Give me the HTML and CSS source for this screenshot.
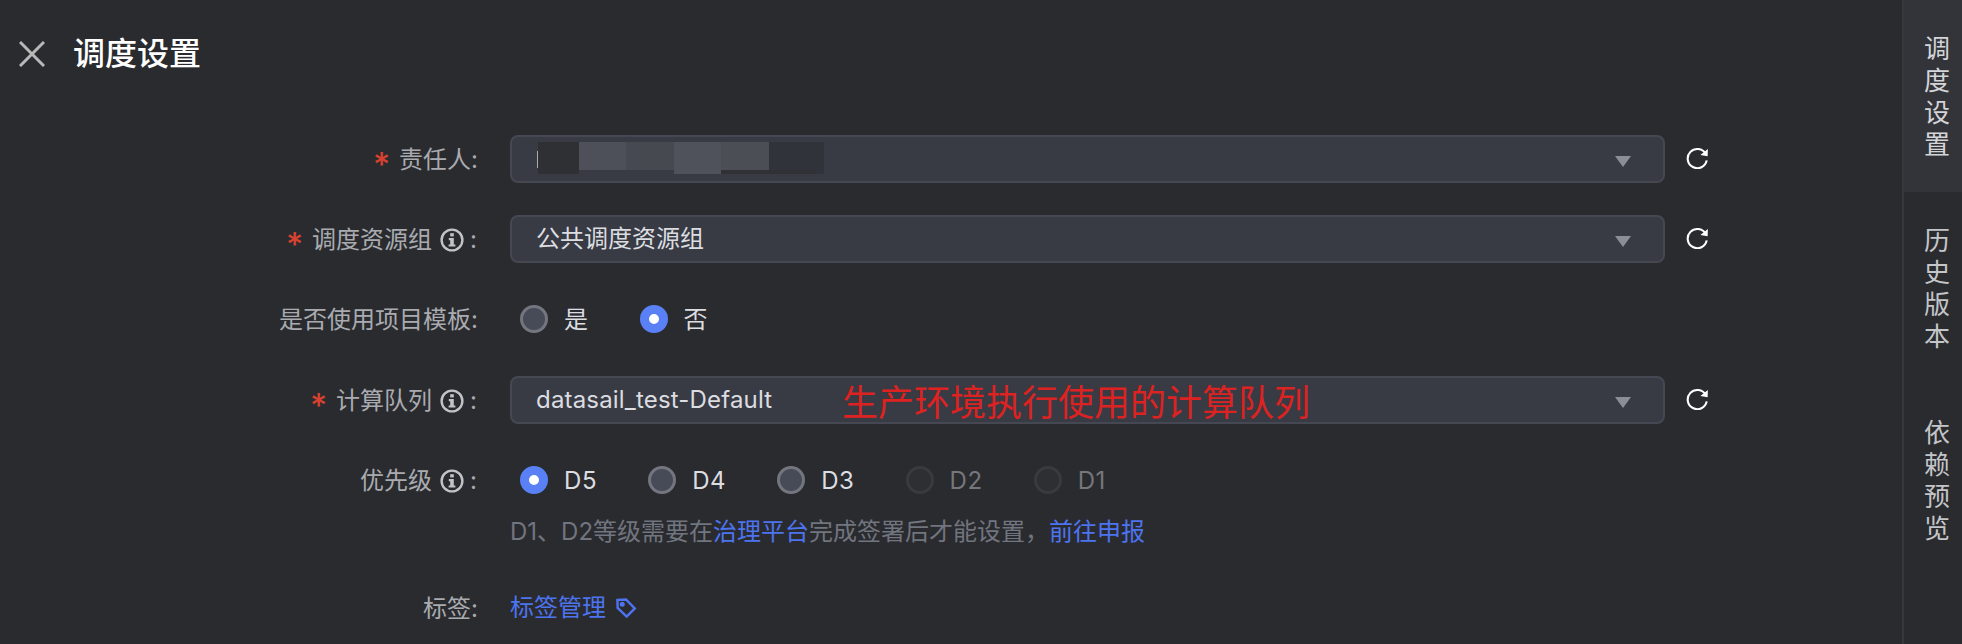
FILE: index.html
```html
<!DOCTYPE html>
<html lang="zh-CN">
<head>
<meta charset="utf-8">
<title>调度设置</title>
<link rel="stylesheet" href="styles.css">
</head>
<body>
<div class="page">
  <main class="main">
    <header class="header">
      <svg class="close" viewBox="0 0 26 26"><path d="M1 1 25 25M25 1 1 25"/></svg>
      <h1 class="title">调度设置</h1>
    </header>
    <form class="form">
      <div class="row row-select">
        <div class="label"><span class="star">*</span><span>责任人</span><span class="colon-tight">:</span></div>
        <div class="select">
          <div class="mosaic">
            <i class="caret"></i>
            <span class="m m1"></span><span class="m m2"></span><span class="m m3"></span><span class="m m4"></span><span class="m m5"></span><span class="m m6"></span>
            <span class="strip"></span>
          </div>
          <i class="arrow"></i>
        </div>
        <svg class="refresh" viewBox="0 0 24 24"><path d="M20.5 8.2A10 10 0 1 0 21.6 15"/><path class="fill" d="M22.8 3 22.6 10.8 15 9.4Z"/></svg>
      </div>
      <div class="row row-select">
        <div class="label"><span class="star">*</span><span>调度资源组</span><svg class="info" viewBox="0 0 24 24"><circle cx="12" cy="12" r="10.4"/><rect class="fill" x="10.2" y="5.2" width="3.6" height="3.2"/><path class="fill" d="M8.8 10h5v6.4h1.6v2.2H8.6v-2.2h1.6v-4.2H8.8Z"/></svg><span class="colon">:</span></div>
        <div class="select"><span class="value">公共调度资源组</span><i class="arrow"></i></div>
        <svg class="refresh" viewBox="0 0 24 24"><path d="M20.5 8.2A10 10 0 1 0 21.6 15"/><path class="fill" d="M22.8 3 22.6 10.8 15 9.4Z"/></svg>
      </div>
      <div class="row row-radio">
        <div class="label"><span>是否使用项目模板</span><span class="colon-tight">:</span></div>
        <div class="radios">
          <label class="radio"><i class="dot"></i>是</label>
          <label class="radio"><i class="dot on"></i>否</label>
        </div>
      </div>
      <div class="row row-select row-queue">
        <div class="label"><span class="star">*</span><span>计算队列</span><svg class="info" viewBox="0 0 24 24"><circle cx="12" cy="12" r="10.4"/><rect class="fill" x="10.2" y="5.2" width="3.6" height="3.2"/><path class="fill" d="M8.8 10h5v6.4h1.6v2.2H8.6v-2.2h1.6v-4.2H8.8Z"/></svg><span class="colon">:</span></div>
        <div class="select">
          <span class="value latin">datasail_test-Default</span>
          <span class="note">生产环境执行使用的计算队列</span>
          <i class="arrow"></i>
        </div>
        <svg class="refresh" viewBox="0 0 24 24"><path d="M20.5 8.2A10 10 0 1 0 21.6 15"/><path class="fill" d="M22.8 3 22.6 10.8 15 9.4Z"/></svg>
      </div>
      <div class="row row-radio">
        <div class="label"><span>优先级</span><svg class="info" viewBox="0 0 24 24"><circle cx="12" cy="12" r="10.4"/><rect class="fill" x="10.2" y="5.2" width="3.6" height="3.2"/><path class="fill" d="M8.8 10h5v6.4h1.6v2.2H8.6v-2.2h1.6v-4.2H8.8Z"/></svg><span class="colon">:</span></div>
        <div class="radios">
          <label class="radio"><i class="dot on"></i>D5</label>
          <label class="radio"><i class="dot"></i>D4</label>
          <label class="radio"><i class="dot"></i>D3</label>
          <label class="radio disabled"><i class="dot"></i>D2</label>
          <label class="radio disabled"><i class="dot"></i>D1</label>
        </div>
      </div>
      <div class="row row-hint">
        <div class="label"></div>
        <p class="hint">D1、D2等级需要在<a class="link">治理平台</a>完成签署后才能设置，<a class="link">前往申报</a></p>
      </div>
      <div class="row row-tags">
        <div class="label"><span>标签</span><span class="colon-tight">:</span></div>
        <a class="link tag-link">标签管理<svg class="tag" viewBox="0 0 20 20"><path d="M2.2 2.6 10 2.2 18 10.4 10.6 17.8 2.4 10Z"/><circle cx="6.6" cy="6.6" r="1.2"/></svg></a>
      </div>
    </form>
  </main>
  <nav class="side">
    <div class="tab active">调度设置</div>
    <div class="tab">历史版本</div>
    <div class="tab">依赖预览</div>
  </nav>
</div>
</body>
</html>
```
FILE: styles.css
```css
* { box-sizing: border-box; }
html, body { margin: 0; height: 100%; }
body {
  background: #2a2b2f;
  color: #dcdde0;
  font-family: "Inter", "Noto Sans CJK SC", sans-serif;
  font-size: 24px;
  overflow: hidden;
}
.page { display: flex; width: 1962px; height: 644px; }
.main { flex: 1; min-width: 0; }
.header { display: flex; align-items: center; height: 108px; padding-left: 19px; }
.close { width: 26px; height: 26px; fill: none; stroke: #b8b8b8; stroke-width: 3; }
.title { margin: 0 0 0 28px; font-size: 32px; font-weight: 500; line-height: 44px; color: #fff; }
.form { padding-top: 27px; }
.row { display: flex; align-items: center; }
.row-select { height: 48px; margin-bottom: 32px; }
.row-radio { height: 48px; margin-bottom: 32px; }
.row-queue { margin-top: 33px; }
.row-hint { height: 40px; margin-top: -24px; margin-bottom: 36px; color: #71757f; }
.row-tags { height: 40px; }
.label {
  width: 478px;
  margin-right: 32px;
  display: flex;
  align-items: center;
  justify-content: flex-end;
  flex: none;
  color: #a9abb0;
  line-height: 32px;
  padding-top: 1px;
}
.star { color: #d8412f; margin-right: 9px; font-size: 33px; font-weight: 500; line-height: 32px; height: 24px; }
.colon { margin-left: 6px; margin-right: 1px; }
.info { width: 24px; height: 24px; margin-left: 8px; fill: none; stroke: #c2c3c6; stroke-width: 2.4; }
.info .fill { fill: #c2c3c6; stroke: none; }
.select {
  position: relative;
  width: 1155px;
  height: 48px;
  flex: none;
  display: flex;
  align-items: center;
  padding-left: 24px;
  background: #383b44;
  border: 2px solid #454852;
  border-radius: 8px;
}
.value { color: #dcdde0; line-height: 32px; }
.latin { letter-spacing: 0.18px; }
.note { position: absolute; left: 330px; top: 3px; color: #dd2222; font-size: 36px; line-height: 44px; }
.arrow {
  position: absolute;
  right: 32px;
  top: 19px;
  width: 0;
  height: 0;
  border-left: 8px solid transparent;
  border-right: 8px solid transparent;
  border-top: 11px solid #8b8e99;
}
.mosaic { position: absolute; left: 26px; top: 5px; display: flex; height: 32px; }
.caret { position: absolute; left: -1px; top: 9px; width: 1px; height: 17px; background: #aaabb0; }
.m { display: block; }
.m1 { width: 41px; background: #2f3034; }
.m2 { width: 47px; height: 28px; background: #4d5058; }
.m3 { width: 48px; height: 28px; background: #464950; }
.m4 { width: 47px; background: #4f525b; }
.m5 { width: 48px; height: 28px; background: #4b4e55; }
.m6 { width: 55px; background: #31333a; }
.strip { position: absolute; left: 183px; top: 28px; width: 95px; height: 4px; background: #303136; }
.refresh { width: 23px; height: 23px; margin: 0 0 3px 21px; flex: none; fill: none; stroke: #fff; stroke-width: 2.2; }
.refresh .fill { fill: #fff; stroke: none; }
.radios { display: flex; padding-left: 10px; }
.radio { display: flex; align-items: center; margin-right: 51px; padding-top: 2px; color: #dcdde0; line-height: 32px; letter-spacing: 0.6px; }
.dot {
  display: block;
  width: 28px;
  height: 28px;
  margin: -2px 16px 0 0;
  background: #474a57;
  border: 3px solid #74767f;
  border-radius: 50%;
}
.dot.on { background: #fff; border: 9px solid #5a80f5; }
.radio.disabled { color: #75777c; }
.radio.disabled .dot { background: #2d2f33; border-color: #383a3f; }
.hint { margin: 0; line-height: 32px; color: #71757f; }
.link { color: #4d74f0; }
.tag-link { display: flex; align-items: center; line-height: 32px; }
.tag { width: 22px; height: 22px; margin-left: 9px; fill: none; stroke: #4d74f0; stroke-width: 2.2; }
.side { width: 60px; flex: none; border-left: 2px solid #37383d; }
.tab { height: 192px; padding: 33px 0 0 20px; font-size: 26px; width: 58px; word-break: break-all; color: #c4c5c8; line-height: 32px; }
.tab.active { background: #33343a; color: #d4d5d8; }
```
